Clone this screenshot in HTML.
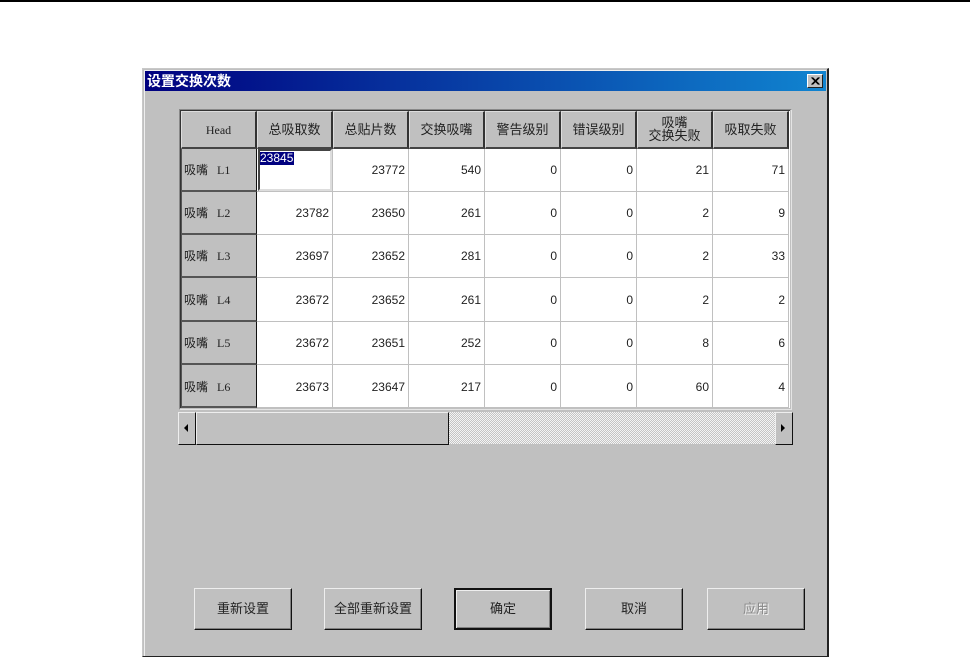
<!DOCTYPE html>
<html><head><meta charset="utf-8"><style>
html,body{margin:0;padding:0;background:#fff;}
body{width:970px;height:657px;position:relative;overflow:hidden;font-family:"Liberation Sans","WenQuanYi Zen Hei","Noto Sans CJK SC",sans-serif;font-size:13px;color:#111;filter:blur(0.35px);}
div{position:absolute;box-sizing:border-box;}
.top{left:0;top:0;width:970px;height:2px;background:#000;}
.dlg{left:142px;top:68px;width:687px;height:589px;background:#c0c0c0;border-top:1px solid #c8c8c8;border-left:1px solid #c8c8c8;border-right:2px solid #222;border-bottom:1px solid #222;}
.dlgi{left:144px;top:70px;width:682px;height:586px;background:#c0c0c0;border-top:1px solid #eee;border-left:1px solid #eee;}
.title{left:145px;top:71px;width:681px;height:20px;background:linear-gradient(90deg,#00007f,#1084d0);color:#fff;font-weight:bold;font-size:14px;line-height:20px;padding-left:2px;}
.x{left:807px;top:74px;width:16px;height:14px;background:#c0c0c0;border:1px solid;border-color:#fff #222 #222 #fff;}
.grid{left:180px;top:110px;width:610px;height:298px;background:#fff;}
.frame{left:179px;top:109px;width:613px;height:301px;border:1px solid;border-color:#888 #e4e4e4 #e4e4e4 #888;}
.h{background:#c0c0c0;border-right:2px solid #333;border-bottom:2px solid #444;border-top:1px solid #ddd;border-left:1px solid #ddd;text-align:center;color:#222;line-height:36px;}
.r{background:#c0c0c0;border-right:1px solid #111;border-bottom:2px solid #555;border-left:1px solid #555;color:#222;line-height:41px;padding-left:2px;white-space:nowrap;}
.m{font-family:"Liberation Serif","WenQuanYi Zen Hei",serif;font-size:12px;}
.r span{font-size:12px;font-family:"WenQuanYi Zen Hei","Noto Sans CJK SC",sans-serif;margin-right:9px;}
.c{background:#fff;border-right:1px solid #c0c0c0;border-bottom:1px solid #c0c0c0;text-align:right;padding-right:3px;font-size:12px;color:#222;line-height:42px;}
.btn{top:588px;width:98px;height:42px;background:#c0c0c0;border:1px solid;border-color:#eee #111 #111 #eee;box-shadow:inset -1px -1px 0 #808080;text-align:center;line-height:39px;color:#222;}
.arrow{width:0;height:0;border-style:solid;}
</style></head><body>
<div class="top"></div>
<div class="dlg"></div><div class="dlgi"></div>
<div class="title">设置交换次数</div>
<div class="x"><svg width="14" height="12" style="position:absolute;left:0;top:0"><path d="M3.5 2.5L10.5 9.5M4.5 2.5L11.5 9.5M10.5 2.5L3.5 9.5M11.5 2.5L4.5 9.5" stroke="#000" stroke-width="1"/></svg></div>

<div class="frame"></div>
<div class="grid"></div>
<div style="left:180px;top:110px;width:610px;height:1px;background:#333"></div>
<div style="left:180px;top:110px;width:1px;height:298px;background:#333"></div>

<div class="h m" style="left:181px;top:111px;width:76px;height:38px;">Head</div>
<div class="h" style="left:257px;top:111px;width:76px;height:38px;">总吸取数</div>
<div class="h" style="left:333px;top:111px;width:76px;height:38px;">总贴片数</div>
<div class="h" style="left:409px;top:111px;width:76px;height:38px;">交换吸嘴</div>
<div class="h" style="left:485px;top:111px;width:76px;height:38px;">警告级别</div>
<div class="h" style="left:561px;top:111px;width:76px;height:38px;">错误级别</div>
<div class="h" style="left:637px;top:111px;width:76px;height:38px;line-height:13px;padding-top:4px;">吸嘴<br>交换失败</div>
<div class="h" style="left:713px;top:111px;width:76px;height:38px;">吸取失败</div>

<div class="r m" style="left:181px;top:149px;width:76px;height:43px;"><span>吸嘴</span>L1</div>
<div class="r m" style="left:181px;top:192px;width:76px;height:43px;"><span>吸嘴</span>L2</div>
<div class="r m" style="left:181px;top:235px;width:76px;height:43px;"><span>吸嘴</span>L3</div>
<div class="r m" style="left:181px;top:278px;width:76px;height:44px;line-height:43px;"><span>吸嘴</span>L4</div>
<div class="r m" style="left:181px;top:322px;width:76px;height:43px;"><span>吸嘴</span>L5</div>
<div class="r m" style="left:181px;top:365px;width:76px;height:43px;line-height:43px;"><span>吸嘴</span>L6</div>

<div class="c" style="left:257px;top:149px;width:76px;height:43px;"></div>
<div style="left:258px;top:149px;width:74px;height:42px;background:#fff;border-style:solid;border-width:2px;border-color:#444 #ddd #ddd #444;"></div>
<div style="left:260px;top:152px;height:13px;width:34px;background:#00007f;color:#fff;font-size:12px;line-height:13px;">23845</div>
<div class="c" style="left:333px;top:149px;width:76px;height:43px;">23772</div><div class="c" style="left:409px;top:149px;width:76px;height:43px;">540</div><div class="c" style="left:485px;top:149px;width:76px;height:43px;">0</div><div class="c" style="left:561px;top:149px;width:76px;height:43px;">0</div><div class="c" style="left:637px;top:149px;width:76px;height:43px;">21</div><div class="c" style="left:713px;top:149px;width:76px;height:43px;">71</div>

<div class="c" style="left:257px;top:192px;width:76px;height:43px;">23782</div><div class="c" style="left:333px;top:192px;width:76px;height:43px;">23650</div><div class="c" style="left:409px;top:192px;width:76px;height:43px;">261</div><div class="c" style="left:485px;top:192px;width:76px;height:43px;">0</div><div class="c" style="left:561px;top:192px;width:76px;height:43px;">0</div><div class="c" style="left:637px;top:192px;width:76px;height:43px;">2</div><div class="c" style="left:713px;top:192px;width:76px;height:43px;">9</div>

<div class="c" style="left:257px;top:235px;width:76px;height:43px;">23697</div><div class="c" style="left:333px;top:235px;width:76px;height:43px;">23652</div><div class="c" style="left:409px;top:235px;width:76px;height:43px;">281</div><div class="c" style="left:485px;top:235px;width:76px;height:43px;">0</div><div class="c" style="left:561px;top:235px;width:76px;height:43px;">0</div><div class="c" style="left:637px;top:235px;width:76px;height:43px;">2</div><div class="c" style="left:713px;top:235px;width:76px;height:43px;">33</div>

<div class="c" style="left:257px;top:278px;width:76px;height:44px;line-height:44px;">23672</div><div class="c" style="left:333px;top:278px;width:76px;height:44px;line-height:44px;">23652</div><div class="c" style="left:409px;top:278px;width:76px;height:44px;line-height:44px;">261</div><div class="c" style="left:485px;top:278px;width:76px;height:44px;line-height:44px;">0</div><div class="c" style="left:561px;top:278px;width:76px;height:44px;line-height:44px;">0</div><div class="c" style="left:637px;top:278px;width:76px;height:44px;line-height:44px;">2</div><div class="c" style="left:713px;top:278px;width:76px;height:44px;line-height:44px;">2</div>

<div class="c" style="left:257px;top:322px;width:76px;height:43px;">23672</div><div class="c" style="left:333px;top:322px;width:76px;height:43px;">23651</div><div class="c" style="left:409px;top:322px;width:76px;height:43px;">252</div><div class="c" style="left:485px;top:322px;width:76px;height:43px;">0</div><div class="c" style="left:561px;top:322px;width:76px;height:43px;">0</div><div class="c" style="left:637px;top:322px;width:76px;height:43px;">8</div><div class="c" style="left:713px;top:322px;width:76px;height:43px;">6</div>

<div class="c" style="left:257px;top:365px;width:76px;height:43px;line-height:44px;">23673</div><div class="c" style="left:333px;top:365px;width:76px;height:43px;line-height:44px;">23647</div><div class="c" style="left:409px;top:365px;width:76px;height:43px;line-height:44px;">217</div><div class="c" style="left:485px;top:365px;width:76px;height:43px;line-height:44px;">0</div><div class="c" style="left:561px;top:365px;width:76px;height:43px;line-height:44px;">0</div><div class="c" style="left:637px;top:365px;width:76px;height:43px;line-height:44px;">60</div><div class="c" style="left:713px;top:365px;width:76px;height:43px;line-height:44px;">4</div>

<div style="left:448px;top:412px;width:328px;height:32px;background:repeating-conic-gradient(#c4c4c4 0 25%,#f4f4f4 0 50%) 0 0/2px 2px;"></div>
<div style="left:178px;top:412px;width:18px;height:33px;background:#c0c0c0;border:1px solid;border-color:#eee #111 #111 #eee;"></div>
<div class="arrow" style="left:184px;top:424px;border-width:4px 4px 4px 0;border-color:transparent #000 transparent transparent;"></div>
<div style="left:196px;top:412px;width:253px;height:33px;background:#c0c0c0;border:1px solid;border-color:#eee #111 #111 #eee;"></div>
<div style="left:775px;top:412px;width:18px;height:33px;background:#c0c0c0;border:1px solid;border-color:#eee #111 #111 #eee;"></div>
<div class="arrow" style="left:781px;top:424px;border-width:4px 0 4px 4px;border-color:transparent transparent transparent #000;"></div>

<div class="btn" style="left:194px;">重新设置</div>
<div class="btn" style="left:324px;">全部重新设置</div>
<div class="btn" style="left:454px;border:2px solid #111;box-shadow:inset 1px 1px 0 #eee,inset -1px -1px 0 #808080;line-height:37px;">确定</div>
<div class="btn" style="left:585px;">取消</div>
<div class="btn" style="left:707px;color:#8a8a8a;text-shadow:1px 1px 0 #f4f4f4;">应用</div>
</body></html>
